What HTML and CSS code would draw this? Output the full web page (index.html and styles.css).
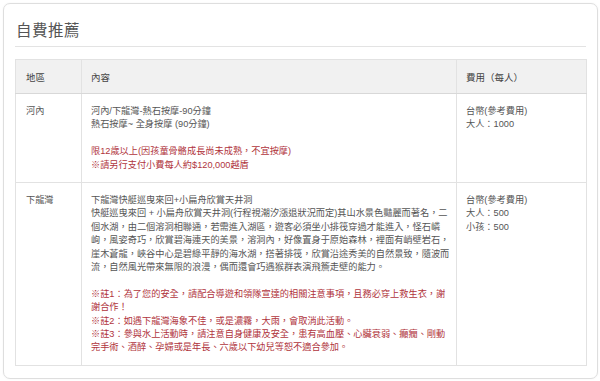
FILE: index.html
```html
<!DOCTYPE html>
<html lang="zh-Hant">
<head>
<meta charset="utf-8">
<link rel="stylesheet" href="styles.css">
</head>
<body>
<div class="card">
  <h2 class="title">自費推薦</h2>
  <table class="tbl">
    <colgroup>
      <col class="c-area">
      <col class="c-content">
      <col class="c-fee">
    </colgroup>
    <thead>
      <tr><th>地區</th><th>內容</th><th>費用（每人）</th></tr>
    </thead>
    <tbody>
      <tr>
        <td>河內</td>
        <td>
          <p class="txt">河內/下龍灣-熱石按摩-90分鐘<br>熱石按摩~ 全身按摩 (90分鐘)</p>
          <p class="txt red gap">限12歲以上(因孩童骨骼成長尚未成熟，不宜按摩)<br>※請另行支付小費每人約$120,000越盾</p>
        </td>
        <td><p class="txt">台幣(參考費用)<br>大人：1000</p></td>
      </tr>
      <tr>
        <td>下龍灣</td>
        <td>
          <p class="txt">下龍灣快艇巡曳來回+小扁舟欣賞天井洞<br>快艇巡曳來回 + 小扁舟欣賞天井洞(行程視潮汐漲退狀況而定)其山水景色豔麗而著名，二<br>個水湖，由二個溶洞相聯通，若需進入湖區，遊客必須坐小排筏穿過才能進入，怪石嶙<br>峋，風姿奇巧，欣賞碧海連天的美景，溶洞內，好像置身于原始森林，裡面有峭壁岩石，<br>崖木蒼龍，峽谷中心是碧綠平靜的海水湖，搭著排筏，欣賞沿途秀美的自然景致，隨波而<br>流，自然風光帶來無限的浪漫，偶而還會巧遇猴群表演飛簷走壁的能力。</p>
          <p class="txt red gap">※註1：為了您的安全，請配合導遊和領隊宣達的相關注意事項，且務必穿上救生衣，謝<br>謝合作！<br>※註2：如遇下龍灣海象不佳，或是濃霧，大雨，會取消此活動。<br>※註3：參與水上活動時，請注意自身健康及安全，患有高血壓、心臟衰弱、癲癇、剛動<br>完手術、酒醉、孕婦或是年長、六歲以下幼兒等恕不適合參加。</p>
        </td>
        <td><p class="txt">台幣(參考費用)<br>大人：500<br>小孩：500</p></td>
      </tr>
    </tbody>
  </table>
</div>
</body>
</html>
```

FILE: styles.css
```css
html, body {
  margin: 0;
  padding: 0;
  background: #ffffff;
}
body {
  font-family: "Liberation Sans", "Noto Sans CJK TC", sans-serif;
  color: #555;
}
.card {
  margin: 3px;
  width: 571px;
  height: 374px;
  box-sizing: content-box;
  border: 1px solid #dedede;
  border-radius: 7px;
  padding: 0 11px;
  box-shadow: 0 0 2px rgba(0,0,0,0.06);
}
.title {
  margin: 0;
  padding: 17px 0 5px 1px;
  font-size: 15.5px;
  line-height: 20px;
  font-weight: 400;
  color: #555;
  letter-spacing: 0.5px;
  border-bottom: 1px solid #e3e3e3;
}
.tbl {
  margin-top: 12px;
  width: 571px;
  border-collapse: collapse;
  border: 1px solid #dddddd;
  table-layout: fixed;
}
.c-area { width: 66px; }
.c-content { width: 375px; }
.c-fee { width: 130px; }
.tbl th {
  background: #f1f1f1;
  height: 33px;
  padding: 0 9px;
  text-align: left;
  font-weight: 400;
  font-size: 9.5px;
  color: #444;
  border: 1px solid #e2e2e2;
  border-bottom: 1px solid #d8d8d8;
}
.tbl th:first-child { padding-left: 10px; }
.tbl td {
  vertical-align: top;
  padding: 11px 9px 10px;
  font-size: 9.2px;
  line-height: 13.4px;
  border: 1px solid #e2e2e2;
  color: #555;
}
.tbl td:first-child { padding-left: 10px; }
.txt {
  margin: 0;
  white-space: nowrap;
}
.gap { margin-top: 13.4px; }
.red { color: #b0343c; }
```
